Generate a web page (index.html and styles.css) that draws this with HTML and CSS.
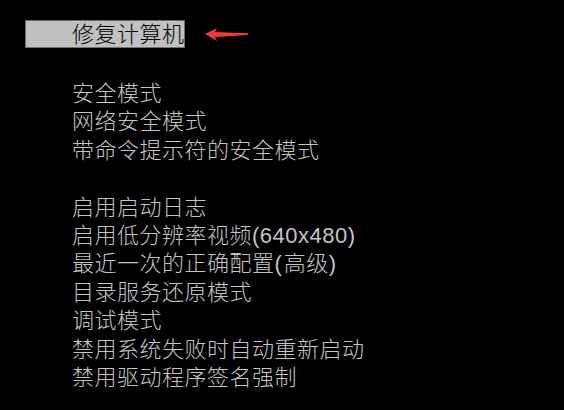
FILE: index.html
```html
<!DOCTYPE html>
<html lang="zh-CN">
<head>
<meta charset="utf-8">
<title>高级启动选项</title>
<link rel="stylesheet" href="styles.css">
</head>
<body>
<div class="screen">
  <div class="title-row">
    <div class="title-box">修复计算机</div>
    <svg class="arrow" width="46" height="16" viewBox="0 0 46 16">
      <polygon points="2,8 14,2 12,6 45,7.3 45,9 12,11 14,15" fill="#f23a3a"/>
    </svg>
  </div>
  <div class="menu">
    <div class="item">安全模式</div>
    <div class="item">网络安全模式</div>
    <div class="item">带命令提示符的安全模式</div>
    <div class="spacer"></div>
    <div class="item">启用启动日志</div>
    <div class="item">启用低分辨率视频(640x480)</div>
    <div class="item">最近一次的正确配置<span class="paren">(</span>高级<span class="paren">)</span></div>
    <div class="item">目录服务还原模式</div>
    <div class="item">调试模式</div>
    <div class="item">禁用系统失败时自动重新启动</div>
    <div class="item">禁用驱动程序签名强制</div>
  </div>
</div>
</body>
</html>
```

FILE: styles.css
```css
html, body {
  margin: 0;
  padding: 0;
  background: #000;
}
.screen {
  width: 564px;
  height: 410px;
  background: #000;
  padding-top: 20px;
  box-sizing: border-box;
  font-family: "Liberation Sans", "Noto Sans CJK SC", sans-serif;
  font-size: 22px;
  font-weight: 300;
  letter-spacing: 0.5px;
}
.title-row {
  display: flex;
  align-items: center;
  margin-left: 25px;
  gap: 18px;
}
.title-box {
  width: 160px;
  height: 28px;
  box-sizing: border-box;
  background: #c0c0c0;
  border: 1px solid #707070;
  color: #000;
  padding-left: 46px;
  padding-top: 2px;
  line-height: 24px;
  white-space: nowrap;
}
.arrow {
  display: block;
}
.menu {
  margin-top: 32px;
  padding-left: 72px;
  color: #c4c4c4;
}
.item {
  line-height: 28.4px;
  height: 28.4px;
  white-space: nowrap;
}
.paren {
  letter-spacing: 2px;
}
.spacer {
  height: 28.4px;
}
```
